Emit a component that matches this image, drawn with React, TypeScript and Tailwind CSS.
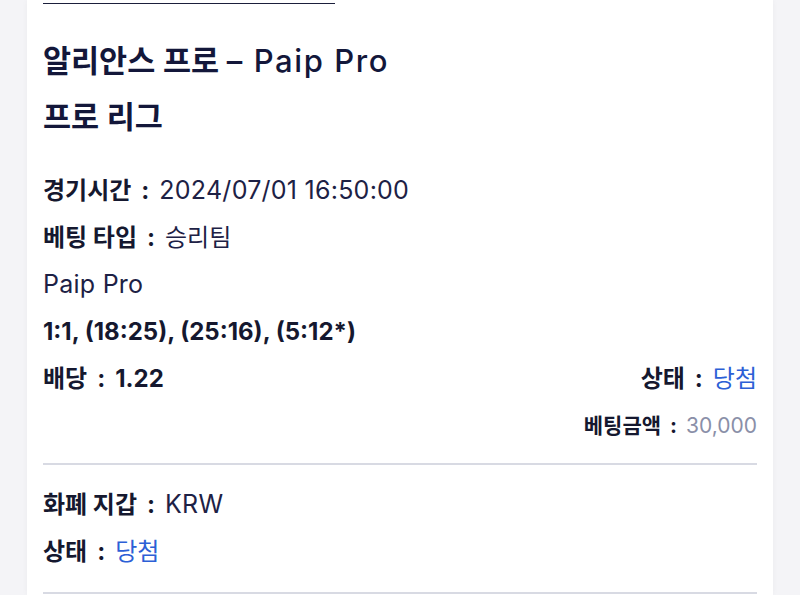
import React from "react";

const font = { fontFamily: '"Inter", "Noto Sans CJK KR", sans-serif' };

function Colon() {
  return <span className="mx-[10px] font-bold text-[#15182f]">:</span>;
}

function Row({ label, value, valueClass = "text-[#1d2145] text-[25px] tracking-[0.25px]" }: { label: string; value: string; valueClass?: string }) {
  return (
    <div className="h-[47px] leading-[47px] text-[24px]">
      <span className="font-bold text-[#15182f]">{label}</span>
      <Colon />
      <span className={valueClass}>{value}</span>
    </div>
  );
}

export default function App() {
  return (
    <div className="min-h-[595px] bg-[#f4f4f7] px-[27px]" style={font}>
      <div className="bg-white min-h-[595px] px-4 shadow-[0_0_6px_rgba(0,0,0,0.04)] overflow-hidden">
        <div className="h-[4px] w-[292px] border-b border-[#1b1f3b]" />
        <div className="mt-[29px] text-[30.5px] font-semibold leading-[56px] text-[#13173a]">
          <div className="h-[56px]">
            알리안스 프로 <span className="font-medium text-[31px] tracking-[1.6px]">– Paip Pro</span>
          </div>
          <div className="h-[56px]">프로 리그</div>
        </div>
        <div className="mt-[22px]">
          <Row label="경기시간" value="2024/07/01 16:50:00" />
          <Row label="베팅 타입" value="승리팀" valueClass="text-[#1d2145] text-[24px]" />
          <div className="h-[47px] leading-[47px] text-[25px] tracking-[0.25px] text-[#1d2145]">Paip Pro</div>
          <div className="h-[47px] leading-[47px] text-[24px] font-bold text-[#15182f]">1:1, (18:25), (25:16), (5:12*)</div>
          <div className="flex h-[47px] justify-between leading-[47px] text-[24px]">
            <span className="font-bold text-[#15182f]">
              배당
              <Colon />
              1.22
            </span>
            <span>
              <span className="font-bold text-[#15182f]">상태</span>
              <Colon />
              <span className="text-[#2c5fd6]">당첨</span>
            </span>
          </div>
          <div className="flex h-[47px] justify-end leading-[47px] text-[21px]">
            <span>
              <span className="font-bold text-[#15182f]">베팅금액</span>
              <span className="mx-[9px] font-bold text-[#15182f]">:</span>
              <span className="text-[#8a8fa8] text-[21px]">30,000</span>
            </span>
          </div>
        </div>
        <div className="mt-[14px] border-t-2 border-[#d8dae3]" />
        <div className="mt-[16px]">
          <Row label="화폐 지갑" value="KRW" />
          <Row label="상태" value="당첨" valueClass="text-[#2c5fd6] text-[24px]" />
        </div>
        <div className="mt-[17px] border-t-2 border-[#d8dae3]" />
      </div>
    </div>
  );
}
